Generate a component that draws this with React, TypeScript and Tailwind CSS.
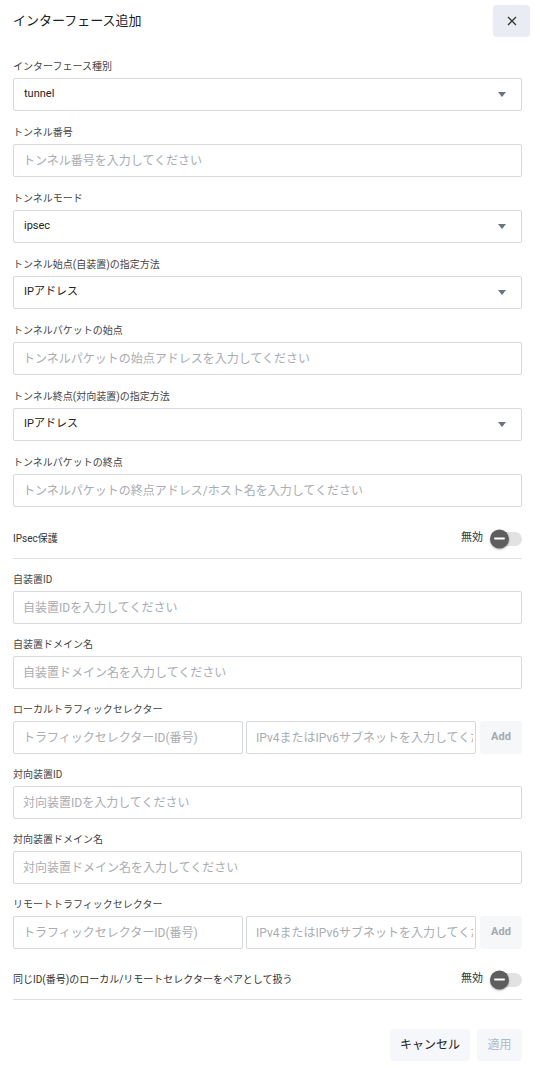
import React from "react";

const FONT = { fontFamily: "Roboto, 'Noto Sans CJK JP', sans-serif" };

function Label({ children }: { children: React.ReactNode }) {
  return <div className="text-[10px] leading-[14px] text-[#444] mb-[4px]">{children}</div>;
}

function Select({ value }: { value: string }) {
  return (
    <div className="h-[33px] border border-[#d6d9de] rounded-[2px] flex items-center justify-between pl-[10px] pr-[15px] bg-white">
      <span className="text-[11px] text-[#222]">{value}</span>
      <svg width="8" height="5" viewBox="0 0 8 5">
        <path d="M0 0 L8 0 L4 5 Z" fill="#6b7280" />
      </svg>
    </div>
  );
}

function Input({ placeholder, className = "" }: { placeholder: string; className?: string }) {
  return (
    <input
      readOnly
      placeholder={placeholder}
      className={
        "block h-[33px] border border-[#d6d9de] rounded-[2px] pl-[9px] pr-[2px] bg-white text-[12px] text-[#222] placeholder:text-[#a9adb3] outline-none " +
        className
      }
      style={FONT}
    />
  );
}

function Toggle() {
  return (
    <div className="flex items-center gap-[7px]">
      <span className="text-[11px] text-[#333]">無効</span>
      <div className="relative w-[32px] h-[14px] rounded-full bg-[#e2e2e2]">
        <div className="absolute left-0 top-1/2 -translate-y-1/2 w-[19px] h-[19px] rounded-full bg-[#5e5e5e] flex items-center justify-center shadow-[0_1px_2px_rgba(0,0,0,0.3)]">
          <div className="w-[11px] h-[2px] bg-white rounded-full" />
        </div>
      </div>
    </div>
  );
}

function Selector() {
  return (
    <div className="flex">
      <Input className="w-[230px]" placeholder="トラフィックセレクターID(番号)" />
      <Input className="w-[230px] ml-[3px]" placeholder="IPv4またはIPv6サブネットを入力してください" />
      <div className="ml-[4px] w-[42px] h-[33px] rounded-[3px] bg-[#f6f7f9] flex items-center justify-center text-[11px] font-bold text-[#a3a9b0]">
        Add
      </div>
    </div>
  );
}

export default function App() {
  return (
    <div className="w-[535px] min-h-[1073px] bg-white" style={FONT}>
      <div className="flex items-center justify-between pl-[13px] pr-[5px] pt-[5px] h-[37px]">
        <div className="text-[13px] text-[#222]">インターフェース追加</div>
        <button className="w-[37px] h-[32px] rounded-[4px] bg-[#e9ecf3] flex items-center justify-center">
          <svg width="10" height="10" viewBox="0 0 10 10">
            <path d="M1 1 L9 9 M9 1 L1 9" stroke="#333" strokeWidth="1.3" />
          </svg>
        </button>
      </div>

      <div className="px-[13px] pt-[23px]">
        <div className="flex flex-col gap-[15px]">
          <div>
            <Label>インターフェース種別</Label>
            <Select value="tunnel" />
          </div>
          <div>
            <Label>トンネル番号</Label>
            <Input className="w-full" placeholder="トンネル番号を入力してください" />
          </div>
          <div>
            <Label>トンネルモード</Label>
            <Select value="ipsec" />
          </div>
          <div>
            <Label>トンネル始点(自装置)の指定方法</Label>
            <Select value="IPアドレス" />
          </div>
          <div>
            <Label>トンネルパケットの始点</Label>
            <Input className="w-full" placeholder="トンネルパケットの始点アドレスを入力してください" />
          </div>
          <div>
            <Label>トンネル終点(対向装置)の指定方法</Label>
            <Select value="IPアドレス" />
          </div>
          <div>
            <Label>トンネルパケットの終点</Label>
            <Input className="w-full" placeholder="トンネルパケットの終点アドレス/ホスト名を入力してください" />
          </div>
        </div>

        <div className="mt-[12px] h-[40px] flex items-center justify-between border-b border-[#e0e0e0]">
          <span className="text-[10px] text-[#333]">IPsec保護</span>
          <Toggle />
        </div>

        <div className="mt-[14px] flex flex-col gap-[14px]">
          <div>
            <Label>自装置ID</Label>
            <Input className="w-full" placeholder="自装置IDを入力してください" />
          </div>
          <div>
            <Label>自装置ドメイン名</Label>
            <Input className="w-full" placeholder="自装置ドメイン名を入力してください" />
          </div>
          <div>
            <Label>ローカルトラフィックセレクター</Label>
            <Selector />
          </div>
          <div>
            <Label>対向装置ID</Label>
            <Input className="w-full" placeholder="対向装置IDを入力してください" />
          </div>
          <div>
            <Label>対向装置ドメイン名</Label>
            <Input className="w-full" placeholder="対向装置ドメイン名を入力してください" />
          </div>
          <div>
            <Label>リモートトラフィックセレクター</Label>
            <Selector />
          </div>
        </div>

        <div className="mt-[11px] h-[40px] flex items-center justify-between border-b border-[#e0e0e0]">
          <span className="text-[10px] text-[#333]">同じID(番号)のローカル/リモートセレクターをペアとして扱う</span>
          <Toggle />
        </div>

        <div className="mt-[29px] flex justify-end gap-[7px]">
          <button className="w-[80px] h-[32px] rounded-[4px] bg-[#f5f7fa] text-[12px] text-[#222]">キャンセル</button>
          <button className="w-[45px] h-[32px] rounded-[4px] bg-[#f5f7fa] text-[12px] text-[#b5bac1]">適用</button>
        </div>
      </div>
    </div>
  );
}
